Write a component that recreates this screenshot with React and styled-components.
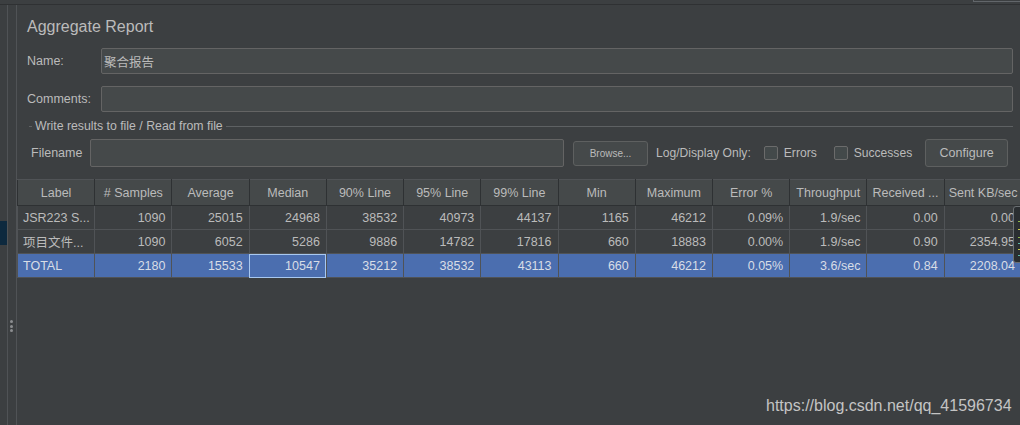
import React from "react";
import styled, { createGlobalStyle } from "styled-components";

const GlobalStyle = createGlobalStyle`
  html, body {
    margin: 0;
    padding: 0;
    background: #3c3f41;
  }
  * { box-sizing: border-box; }
`;

const columns = [
  "Label", "# Samples", "Average", "Median", "90% Line", "95% Line", "99% Line",
  "Min", "Maximum", "Error %", "Throughput", "Received ...", "Sent KB/sec",
];

const rows = [
  ["JSR223 S...", "1090", "25015", "24968", "38532", "40973", "44137", "1165", "46212", "0.09%", "1.9/sec", "0.00", "0.00"],
  ["项目文件...", "1090", "6052", "5286", "9886", "14782", "17816", "660", "18883", "0.00%", "1.9/sec", "0.90", "2354.95"],
  ["TOTAL", "2180", "15533", "10547", "35212", "38532", "43113", "660", "46212", "0.05%", "3.6/sec", "0.84", "2208.04"],
];

export default function App() {
  return (
    <>
      <GlobalStyle />
      <Window>
        <TopBar>
          <TopTab />
        </TopBar>
        <Body>
          <TreeGutter>
            <TreeSelection />
          </TreeGutter>
          <SplitGutter>
            <Grip>
              <GripDot />
              <GripDot />
              <GripDot />
            </Grip>
          </SplitGutter>
          <Main>
            <Form>
              <Title>Aggregate Report</Title>
              <FieldRow $top={11}>
                <FieldLabel>Name:</FieldLabel>
                <TextField value="聚合报告" readOnly />
              </FieldRow>
              <FieldRow $top={12}>
                <FieldLabel>Comments:</FieldLabel>
                <TextField value="" readOnly />
              </FieldRow>
              <GroupTitle>
                <Dash />
                <span>Write results to file / Read from file</span>
                <Rule />
              </GroupTitle>
              <FileRow>
                <FileLabel>Filename</FileLabel>
                <FileField value="" readOnly />
                <SmallButton>Browse...</SmallButton>
                <Caption>Log/Display Only:</Caption>
                <Check $gap={13} />
                <CheckLabel>Errors</CheckLabel>
                <Check $gap={17} />
                <CheckLabel>Successes</CheckLabel>
                <Button>Configure</Button>
              </FileRow>
            </Form>
            <TableWrap>
              <Table>
                <thead>
                  <tr>
                    {columns.map((c) => (
                      <Th key={c}>{c}</Th>
                    ))}
                  </tr>
                </thead>
                <tbody>
                  {rows.map((r, i) => (
                    <Tr key={i} $selected={i === 2}>
                      {r.map((v, j) => (
                        <Td key={j} $left={j === 0} $focus={i === 2 && j === 3}>
                          {v}
                        </Td>
                      ))}
                    </Tr>
                  ))}
                </tbody>
              </Table>
              <MiniMap>
                <svg width="7" height="56" viewBox="0 0 7 56">
                  <rect x="4" y="14" width="3" height="1" fill="#8fb84a" />
                  <rect x="4" y="22" width="3" height="1" fill="#c9c94a" />
                  <rect x="4" y="30" width="3" height="1" fill="#8fb84a" />
                  <rect x="4" y="36" width="3" height="1" fill="#5fb8a8" />
                  <rect x="4" y="42" width="3" height="1" fill="#c9c94a" />
                  <rect x="4" y="48" width="3" height="1" fill="#5fb8a8" />
                </svg>
              </MiniMap>
            </TableWrap>
            <Watermark>https://blog.csdn.net/qq_41596734</Watermark>
          </Main>
        </Body>
      </Window>
    </>
  );
}

const Window = styled.div`
  width: 1020px;
  height: 425px;
  overflow: hidden;
  background: #3c3f41;
  color: #bbbbbb;
  font-family: "Liberation Sans", Arial, "Noto Sans CJK SC", sans-serif;
  font-size: 12.5px;
  display: flex;
  flex-direction: column;
`;

const TopBar = styled.div`
  height: 5px;
  border-bottom: 1px solid #2f3133;
  display: flex;
  justify-content: flex-end;
  flex-shrink: 0;
`;

const TopTab = styled.div`
  width: 47px;
  height: 2px;
  border-left: 1px solid #62666a;
  border-bottom: 1px solid #62666a;
`;

const Body = styled.div`
  flex: 1;
  display: flex;
  min-height: 0;
`;

const TreeGutter = styled.div`
  width: 8px;
  border-right: 1px solid #505356;
  padding-top: 216px;
`;

const TreeSelection = styled.div`
  height: 24px;
  background: #0d293e;
`;

const SplitGutter = styled.div`
  width: 9px;
  border-right: 1px solid #505356;
  padding-top: 315px;
  display: flex;
  justify-content: center;
`;

const Grip = styled.div`
  display: flex;
  flex-direction: column;
  gap: 1.5px;
  padding-right: 1px;
`;

const GripDot = styled.div`
  width: 3px;
  height: 3px;
  border-radius: 50%;
  background: #8c8e90;
`;

const Main = styled.div`
  flex: 1;
  min-width: 0;
  position: relative;
`;

const Form = styled.div`
  padding: 0 7px 0 10px;
  display: flex;
  flex-direction: column;
`;

const Title = styled.div`
  margin-top: 12px;
  height: 20px;
  line-height: 20px;
  font-size: 16px;
  color: #bbbbbb;
`;

const FieldRow = styled.div`
  margin-top: ${(p) => p.$top}px;
  display: flex;
  align-items: center;
  height: 26px;
`;

const FieldLabel = styled.div`
  width: 74px;
  flex-shrink: 0;
`;

const TextField = styled.input`
  flex: 1;
  height: 26px;
  background: #45494a;
  border: 1px solid #646464;
  border-radius: 2px;
  color: #bbbbbb;
  font-family: "Liberation Sans", "Noto Sans CJK SC", sans-serif;
  font-size: 12.5px;
  padding: 0 2px;
  outline: none;
`;

const GroupTitle = styled.div`
  margin-top: 7px;
  height: 14px;
  display: flex;
  align-items: center;
  font-size: 12.3px;
  padding-left: 2px;
  white-space: nowrap;
`;

const Dash = styled.div`
  width: 3px;
  height: 1px;
  background: #5e6163;
  margin-right: 3px;
`;

const Rule = styled.div`
  flex: 1;
  height: 1px;
  background: #5e6163;
  margin-left: 3px;
`;

const FileRow = styled.div`
  margin-top: 6px;
  height: 28px;
  display: flex;
  align-items: center;
  padding-left: 4px;
  white-space: nowrap;
  font-size: 12.1px;
`;

const FileLabel = styled.div`
  width: 59px;
  flex-shrink: 0;
  font-size: 12.5px;
`;

const FileField = styled(TextField)`
  flex: none;
  width: 474px;
  height: 28px;
`;

const SmallButton = styled.div`
  margin-left: 9px;
  width: 75px;
  height: 25px;
  border: 1px solid #5e6060;
  border-radius: 3px;
  background: #45494a;
  font-size: 10px;
  display: flex;
  align-items: center;
  justify-content: center;
`;

const Caption = styled.div`
  margin-left: 8px;
`;

const Check = styled.div`
  margin-left: ${(p) => p.$gap}px;
  width: 14px;
  height: 14px;
  border: 1px solid #6b6b6b;
  border-radius: 2px;
  background: #43494a;
  flex-shrink: 0;
`;

const CheckLabel = styled.div`
  margin-left: 6px;
`;

const Button = styled.div`
  margin-left: 13px;
  width: 83px;
  height: 28px;
  border: 1px solid #5e6060;
  border-radius: 3px;
  background: #45494a;
  font-size: 12.5px;
  display: flex;
  align-items: center;
  justify-content: center;
`;

const TableWrap = styled.div`
  margin-top: 12px;
  position: relative;
`;

const Table = styled.table`
  width: 1005px;
  table-layout: fixed;
  border-collapse: collapse;
  border-left: 1px solid #505356;
`;

const Th = styled.th`
  height: 26px;
  padding: 0 4px;
  background: #45494a;
  border: 1px solid #2e3133;
  border-top: 1px solid #505356;
  font-weight: normal;
  text-align: center;
  white-space: nowrap;
  overflow: hidden;
`;

const Tr = styled.tr`
  background: ${(p) => (p.$selected ? "#4b6eaf" : "#3c3f41")};
  color: ${(p) => (p.$selected ? "#d8dde6" : "#bbbbbb")};
`;

const Td = styled.td`
  height: 24px;
  padding: 0 6px 0 5px;
  border: 1px solid #505356;
  text-align: ${(p) => (p.$left ? "left" : "right")};
  white-space: nowrap;
  overflow: hidden;
  outline: ${(p) => (p.$focus ? "1px solid #a8c8f0" : "none")};
  outline-offset: -1px;
`;

const MiniMap = styled.div`
  position: absolute;
  left: 996px;
  top: 27px;
  width: 9px;
  height: 57px;
  background: #2a2e31;
  border: 1px solid #6a6f72;
  border-radius: 3px 0 0 3px;
`;

const Watermark = styled.div`
  position: absolute;
  left: 749px;
  top: 392px;
  font-size: 16px;
  color: #c4c4c4;
  white-space: nowrap;
`;
